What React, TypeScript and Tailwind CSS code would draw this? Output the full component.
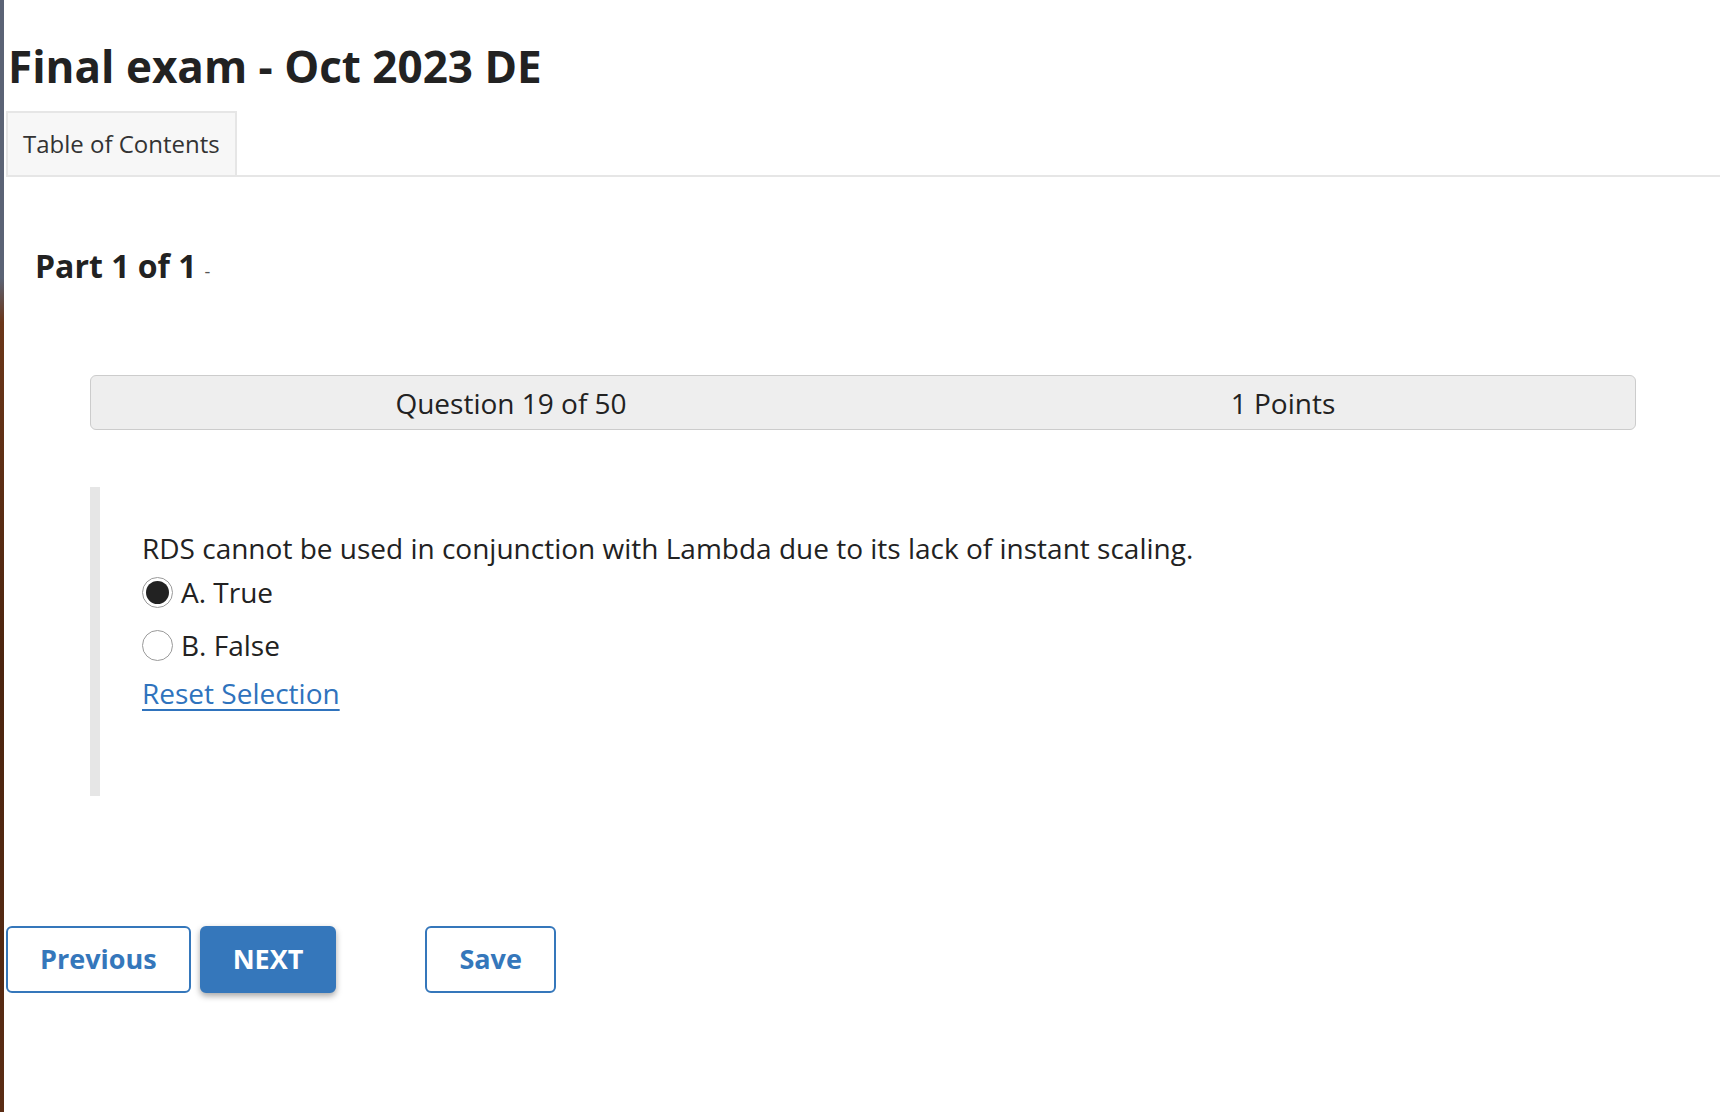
import React, { useState } from 'react';

const options = [
  { id: 'a', label: 'A. True' },
  { id: 'b', label: 'B. False' },
];

function Radio({ checked }: { checked: boolean }) {
  return (
    <span className="flex h-[31px] w-[31px] shrink-0 items-center justify-center rounded-full border-[1.5px] border-[#9a9a9a] bg-white">
      {checked && <span className="h-[23px] w-[23px] rounded-full bg-[#222]" />}
    </span>
  );
}

export default function App() {
  const [answer, setAnswer] = useState<string | null>('a');

  return (
    <div className="flex h-[1112px] w-[1720px] overflow-hidden bg-white font-['Open_Sans',sans-serif] text-[#222]">
      {/* sliver of desktop showing at the window edge */}
      <div className="w-[4px] shrink-0 bg-[linear-gradient(to_bottom,#5b6375_0%,#5b6375_25%,#6b3619_29%,#4b240f_60%,#5a2c14_100%)]" />

      <div className="flex-1 pl-[2px]">
        <h1 className="pl-[2px] pt-[44px] text-[44px] font-bold leading-none">Final exam - Oct 2023 DE</h1>

        {/* tabs */}
        <div className="mt-[23px] flex border-b-2 border-[#e6e6e6]">
          <div className="border-x-2 border-t-2 border-[#e6e6e6] bg-[#f7f7f7] px-[15px] py-[19px] text-[24px] leading-none text-[#333]">
            Table of Contents
          </div>
        </div>

        <h2 className="mt-[73px] pl-[29px] text-[32px] font-bold leading-none">
          Part 1 of 1<span className="ml-[8px] text-[18px] font-normal text-[#555]">-</span>
        </h2>

        {/* question header */}
        <div className="mx-[84px] mt-[93px] flex h-[55px] items-center rounded-[6px] border border-[#cccccc] bg-[#eeeeee] text-[28px]">
          <div className="w-[840px] text-center">Question 19 of 50</div>
          <div className="flex-1 text-center">1 Points</div>
        </div>

        {/* question body */}
        <div className="ml-[84px] mt-[57px] h-[309px] border-l-[10px] border-[#e6e6e6] pl-[42px] pt-[42px]">
          <p className="text-[28px] leading-[38px]">
            RDS cannot be used in conjunction with Lambda due to its lack of instant scaling.
          </p>
          <div className="mt-[6px] flex flex-col gap-[15px]">
            {options.map((o) => (
              <label key={o.id} className="flex cursor-pointer items-center gap-[8px] text-[28px] leading-[38px]" onClick={() => setAnswer(o.id)}>
                <Radio checked={answer === o.id} />
                {o.label}
              </label>
            ))}
          </div>
          <button
            className="mt-[10px] text-[28px] leading-[38px] text-[#2f73bd] underline underline-offset-[5px]"
            onClick={() => setAnswer(null)}
          >
            Reset Selection
          </button>
        </div>

        {/* nav buttons */}
        <div className="mt-[130px] flex items-center">
          <button className="h-[67px] rounded-[6px] border-2 border-[#3577bb] bg-white px-[32px] text-[27px] font-bold text-[#3577bb]">
            Previous
          </button>
          <button className="ml-[9px] h-[67px] rounded-[6px] border-2 border-[#3577bb] bg-[#3577bb] px-[31px] text-[27px] font-bold text-white shadow-[0_3px_6px_rgba(0,0,0,0.35)]">
            NEXT
          </button>
          <button className="ml-[89px] h-[67px] rounded-[6px] border-2 border-[#3577bb] bg-white px-[32px] text-[27px] font-bold text-[#3577bb]">
            Save
          </button>
        </div>
      </div>
    </div>
  );
}
